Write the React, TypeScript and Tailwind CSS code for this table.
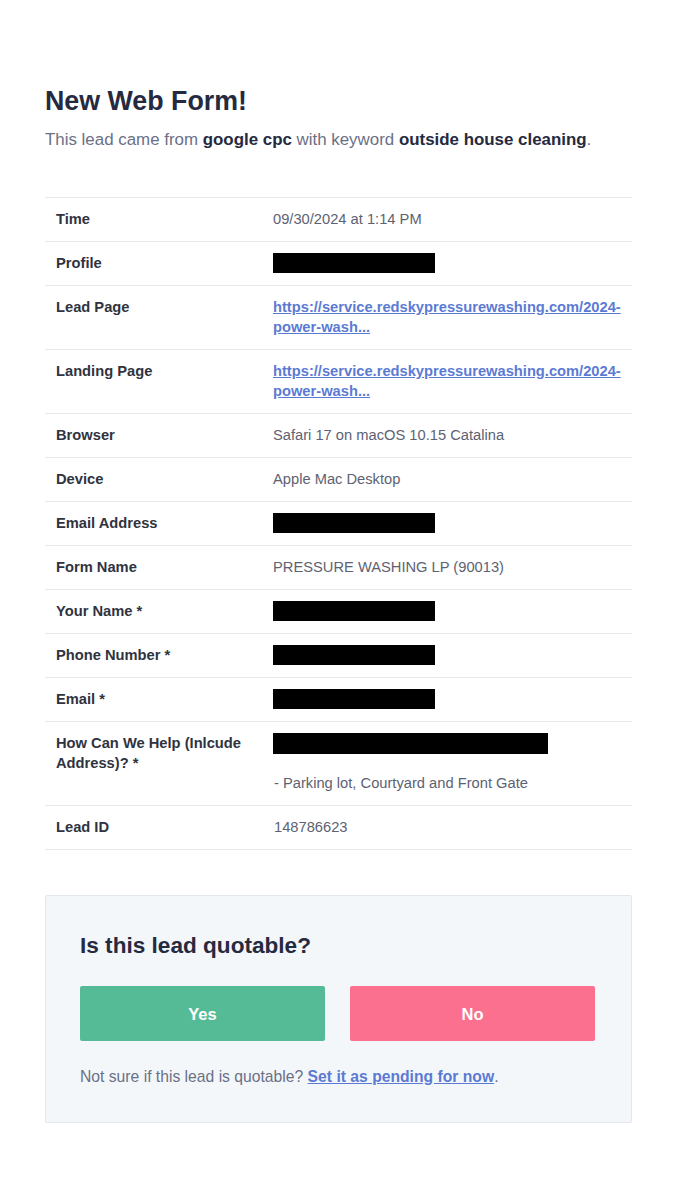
import React from 'react'

type Row = {
  label: string
  value?: string
  link?: boolean
  redacted?: boolean
}

const rows: Row[] = [
  { label: 'Time', value: '09/30/2024 at 1:14 PM' },
  { label: 'Profile', redacted: true },
  { label: 'Lead Page', value: 'https://service.redskypressurewashing.com/2024-power-wash...', link: true },
  { label: 'Landing Page', value: 'https://service.redskypressurewashing.com/2024-power-wash...', link: true },
  { label: 'Browser', value: 'Safari 17 on macOS 10.15 Catalina' },
  { label: 'Device', value: 'Apple Mac Desktop' },
  { label: 'Email Address', redacted: true },
  { label: 'Form Name', value: 'PRESSURE WASHING LP (90013)' },
  { label: 'Your Name *', redacted: true },
  { label: 'Phone Number *', redacted: true },
  { label: 'Email *', redacted: true },
]

function LeadRow({ row }: { row: Row }) {
  return (
    <div className="grid grid-cols-[218px_minmax(0,1fr)] border-b border-[#e6eaef]">
      <div className="px-[11px] pt-[11px] pb-[12px] font-bold text-[#2f3340]">{row.label}</div>
      <div className="pl-[10px] pr-[11px] pt-[11px] pb-[12px] text-[#5d6272]">
        {row.redacted ? (
          <div className="h-[20px] w-[162px] bg-black" />
        ) : row.link ? (
          <a href="#" className="font-bold text-[#5b7bd3] underline">{row.value}</a>
        ) : (
          row.value
        )}
      </div>
    </div>
  )
}

export default function App() {
  return (
    <div className="min-h-screen w-full bg-white font-['Liberation_Sans',Arial,sans-serif] text-[14.7px] leading-[20px]">
      <div className="ml-[45px] w-[587px] pt-[85px] pb-[77px]">
        <h1 className="text-[26.8px] font-bold leading-[32px] text-[#262a40]">New Web Form!</h1>
        <p className="mt-[11px] text-[16.9px] leading-[24px] text-[#6a7085]">
          This lead came from <b className="text-[#262a40]">google cpc</b> with keyword{' '}
          <b className="text-[#262a40]">outside house cleaning</b>.
        </p>

        <div className="mt-[45px] border-t border-[#e6eaef]">
          {rows.map(r => (
            <LeadRow key={r.label} row={r} />
          ))}
          <div className="grid grid-cols-[218px_minmax(0,1fr)] border-b border-[#e6eaef]">
            <div className="pl-[11px] pr-[14px] pt-[11px] pb-[12px] font-bold text-[#2f3340]">How Can We Help (Inlcude Address)? *</div>
            <div className="pl-[10px] pr-[11px] pt-[11px] pb-[12px] text-[#5d6272]">
              <div className="h-[21px] w-[275px] bg-black" />
              <div className="h-[19px]" />
              <div className="pl-[1px]">- Parking lot, Courtyard and Front Gate</div>
            </div>
          </div>
          <div className="grid grid-cols-[218px_minmax(0,1fr)] border-b border-[#e6eaef]">
            <div className="px-[11px] pt-[11px] pb-[12px] font-bold text-[#2f3340]">Lead ID</div>
            <div className="pl-[11px] pr-[11px] pt-[11px] pb-[12px] text-[#5d6272]">148786623</div>
          </div>
        </div>

        <div className="mt-[45px] rounded-[2px] border border-[#e3e8ee] bg-[#f4f7fa] pl-[34px] pr-[36px] pt-[36px] pb-[35px]">
          <h2 className="text-[22.6px] font-bold leading-[28px] text-[#262a40]">Is this lead quotable?</h2>
          <div className="mt-[26px] grid grid-cols-2 gap-[25px]">
            <button className="h-[55px] rounded-[2px] bg-[#55bb97] text-[16.5px] font-bold text-white">Yes</button>
            <button className="h-[55px] rounded-[2px] bg-[#fb708e] text-[16.5px] font-bold text-white">No</button>
          </div>
          <p className="mt-[26px] text-[15.7px] leading-[20px] text-[#6a7085]">
            Not sure if this lead is quotable?{' '}
            <a href="#" className="font-bold text-[#5b7bd3] underline">Set it as pending for now</a>.
          </p>
        </div>
      </div>
    </div>
  )
}
